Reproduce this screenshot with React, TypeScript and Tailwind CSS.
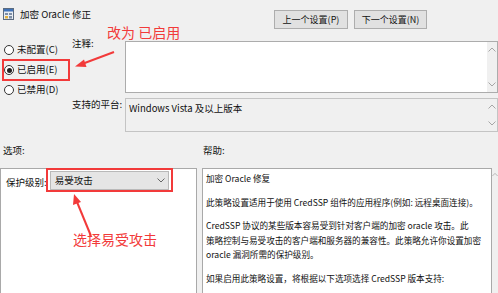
import * as React from "react";

const font = {
  fontFamily: '"Noto Sans CJK SC", "Noto Sans", sans-serif',
};

/**
 * Small chevron used in the fake scrollbars and the dropdown.
 */
function Chevron(props: { up?: boolean; className?: string }) {
  return (
    <svg width="8" height="5" viewBox="0 0 8 5" className={props.className}>
      <path
        d={props.up ? "M0.5 4.5 L4 1 L7.5 4.5" : "M0.5 0.5 L4 4 L7.5 0.5"}
        fill="none"
        stroke="currentColor"
        strokeWidth="1"
      />
    </svg>
  );
}

function ScrollBar(props: { className?: string }) {
  return (
    <div
      className={
        "w-[10px] bg-[#f0f0f0] flex flex-col items-center justify-between py-[5px] text-[#a6a6a6] " +
        (props.className ?? "")
      }
    >
      <Chevron up />
      <Chevron />
    </div>
  );
}

function Radio(props: { label: string; checked?: boolean }) {
  return (
    <div className="h-[20px] flex items-center pl-[4px] gap-[3px]">
      <div className="size-[10px] rounded-full border border-[#333] bg-white flex items-center justify-center">
        {props.checked && <div className="size-[5px] rounded-full bg-[#222]" />}
      </div>
      <span className="text-[9.5px] text-[#111] leading-none">{props.label}</span>
    </div>
  );
}

function PolicyIcon() {
  return (
    <svg width="11" height="12" viewBox="0 0 11 12">
      <rect x="0.5" y="0.5" width="10" height="11" fill="#e8edf3" stroke="#5b6b80" />
      <rect x="1" y="1" width="9" height="2.5" fill="#3f72b8" />
      <rect x="2" y="5" width="3" height="2" fill="#7d8ea5" />
      <rect x="6" y="5" width="3" height="2" fill="#7d8ea5" />
      <rect x="2" y="8" width="3" height="2.5" fill="#e0b040" />
      <rect x="6" y="8" width="3" height="2.5" fill="#7d8ea5" />
    </svg>
  );
}

function Btn(props: { label: string; width: string }) {
  return (
    <div
      className={
        "h-[19px] bg-[#e1e1e1] border border-[#adadad] flex items-center justify-center text-[9px] text-[#111] " +
        props.width
      }
    >
      {props.label}
    </div>
  );
}

const helpParas: string[][] = [
  ["加密 Oracle 修复"],
  ["此策略设置适用于使用 CredSSP 组件的应用程序(例如: 远程桌面连接)。"],
  [
    "CredSSP 协议的某些版本容易受到针对客户端的加密 oracle 攻击。此",
    "策略控制与易受攻击的客户端和服务器的兼容性。此策略允许你设置加密",
    "oracle 漏洞所需的保护级别。",
  ],
  ["如果启用此策略设置，将根据以下选项选择 CredSSP 版本支持:"],
];

export default function App() {
  return (
    <div
      className="relative w-[498px] h-[293px] overflow-hidden bg-[#f0f0f0] text-[#111]"
      style={font}
    >
      {/* header */}
      <div className="h-[41px] flex justify-between">
        <div className="flex items-center gap-[6px] pl-[3px] h-[28px]">
          <PolicyIcon />
          <span className="text-[9.5px]">加密 Oracle 修正</span>
        </div>
        <div className="flex gap-[6px] pt-[10px] pr-[71px]">
          <Btn label="上一个设置(P)" width="w-[74px]" />
          <Btn label="下一个设置(N)" width="w-[73px]" />
        </div>
      </div>

      {/* state + comment + platform */}
      <div className="flex h-[91px]">
        <div className="w-[72px] flex flex-col -mt-px">
          <Radio label="未配置(C)" />
          <Radio label="已启用(E)" checked />
          <Radio label="已禁用(D)" />
        </div>
        <div className="flex-1 flex flex-col">
          <div className="flex h-[52px]">
            <div className="w-[53px] text-[9.5px] -mt-[5px]">注释:</div>
            <div className="flex-1 flex bg-white border border-[#acacac]">
              <div className="flex-1" />
              <ScrollBar />
            </div>
          </div>
          <div className="flex h-[34px] mt-[5px]">
            <div className="w-[53px] text-[9.5px] -mt-[1px]">支持的平台:</div>
            <div className="flex-1 flex border border-[#c4c4c4]">
              <div className="flex-1 text-[9.5px] pl-[3px] pt-[2px]">
                Windows Vista 及以上版本
              </div>
              <ScrollBar />
            </div>
          </div>
        </div>
      </div>

      {/* section labels */}
      <div className="h-[36px] flex items-center text-[9.5px]">
        <div className="w-[203px] pl-[3px]">选项:</div>
        <div>帮助:</div>
      </div>

      {/* panes */}
      <div className="flex h-[130px]">
        <div className="w-[197px] bg-white border border-[#a9a9a9] flex items-start gap-[3px] pl-[5px] pt-[2px]">
          <span className="text-[9.5px] mt-[4px]">保护级别:</span>
          <div className="w-[119px] h-[19px] bg-[#e5e5e5] border border-[#b9b9b9] flex items-center justify-between pl-[4px] pr-[3px]">
            <span className="text-[9.5px]">易受攻击</span>
            <Chevron className="text-[#666]" />
          </div>
        </div>
        <div className="w-[5px]" />
        <div className="w-[290px] bg-white border border-[#a9a9a9] pl-[3px] pt-[2px] flex flex-col gap-[9px]">
          {helpParas.map((p, i) => (
            <div key={i} className="text-[8.6px] leading-[14.5px] whitespace-nowrap">
              {p.map((line) => (
                <div key={line}>{line}</div>
              ))}
            </div>
          ))}
        </div>
        <div className="w-[6px] bg-[#f0f0f0] flex justify-start pt-[4px] text-[#a6a6a6] overflow-hidden">
          <Chevron up />
        </div>
      </div>

      {/* red annotations */}
      <div className="absolute left-[2px] top-[59px] w-[68px] h-[22px] border-2 border-[#f23a3a]" />
      <div className="absolute left-[46px] top-[168px] w-[127px] h-[24px] border-2 border-[#f23a3a]" />
      <div className="absolute left-[107px] top-[24px] text-[14px] leading-[16px] text-[#f23a3a]">
        改为 已启用
      </div>
      <div className="absolute left-[73px] top-[231px] text-[14px] leading-[16px] text-[#f23a3a]">
        选择易受攻击
      </div>
      <svg
        className="absolute left-0 top-0 pointer-events-none"
        width="498"
        height="293"
        viewBox="0 0 498 293"
      >
        <line x1="114" y1="52" x2="82" y2="64" stroke="#f23a3a" strokeWidth="2" />
        <polygon points="75,66.5 84,59.5 86.5,67" fill="#f23a3a" />
        <line x1="91" y1="236" x2="77" y2="202" stroke="#f23a3a" strokeWidth="2" />
        <polygon points="74,194 73,205 81,202" fill="#f23a3a" />
      </svg>
    </div>
  );
}
